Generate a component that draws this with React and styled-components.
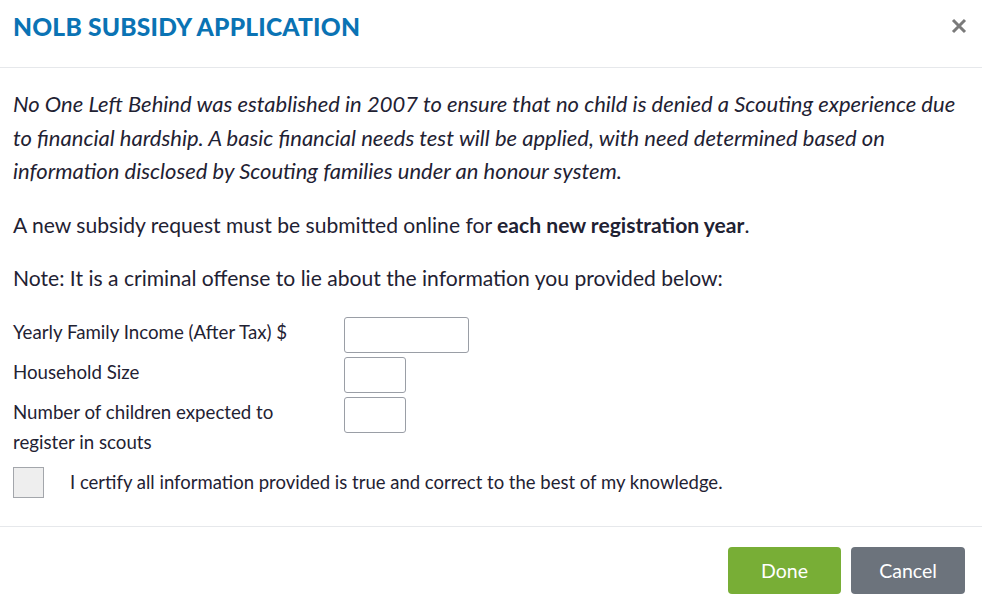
import React from 'react';
import styled, { createGlobalStyle } from 'styled-components';

const GlobalStyle = createGlobalStyle`
  html, body {
    margin: 0;
    padding: 0;
    background: #ffffff;
  }

  body {
    font-family: Lato, "Liberation Sans", sans-serif;
    color: #1f2233;
  }
`;

const Modal = styled.div`
  width: 982px;
  height: 606px;
  display: flex;
  flex-direction: column;
  background: #ffffff;
`;

const Header = styled.div`
  height: 68px;
  box-sizing: border-box;
  border-bottom: 1px solid #e6e8eb;
  display: flex;
  align-items: center;
  justify-content: space-between;
  padding: 0 13px 14px 13px;
`;

const Title = styled.h1`
  margin: 0;
  font-size: 24.6px;
  font-weight: 900;
  letter-spacing: 0.2px;
  color: #0a73b4;
`;

const CloseButton = styled.button`
  border: none;
  background: none;
  padding: 0;
  width: 18px;
  height: 18px;
  cursor: pointer;
  display: flex;
`;

const Body = styled.div`
  flex: 1;
  padding: 19px 13px 0 13px;
  border-bottom: 1px solid #e6e8eb;
`;

const Intro = styled.p`
  margin: 0 0 20px 0;
  width: 950px;
  font-size: 22px;
  line-height: 33.5px;
  font-style: italic;
`;

const Paragraph = styled.p`
  margin: 0 0 20px 0;
  font-size: 21.1px;
  line-height: 33px;
`;

const FormGrid = styled.div`
  display: grid;
  grid-template-columns: 331px auto;
  row-gap: 4px;
  padding-top: 3px;
`;

const Label = styled.label`
  font-size: 18.7px;
  line-height: 30px;
  width: 290px;
`;

const Input = styled.input`
  box-sizing: border-box;
  width: ${({ wide }) => (wide ? '125px' : '62px')};
  height: 36px;
  border: 1px solid #9a9ea6;
  border-radius: 3px;
  background: #ffffff;
`;

const CertifyRow = styled.div`
  display: flex;
  align-items: center;
  gap: 26px;
  margin-top: 10px;
`;

const Checkbox = styled.span`
  width: 31px;
  height: 31px;
  box-sizing: border-box;
  border: 1px solid #a3a6ab;
  background: #eeeeee;
  flex-shrink: 0;
`;

const CertifyText = styled.span`
  font-size: 18.5px;
`;

const Footer = styled.div`
  height: 79px;
  display: flex;
  justify-content: flex-end;
  align-items: flex-start;
  gap: 10px;
  padding: 20px 17px 0 0;
  box-sizing: border-box;
`;

const Button = styled.button`
  width: ${({ w }) => w}px;
  height: 47px;
  border: none;
  border-radius: 4px;
  color: #ffffff;
  font-family: inherit;
  font-size: 19.5px;
  background: ${({ variant }) => (variant === 'primary' ? '#78ae36' : '#6c737c')};
  cursor: pointer;
`;

const App = () => (
  <Modal>
    <GlobalStyle />
    <Header>
      <Title>NOLB SUBSIDY APPLICATION</Title>
      <CloseButton aria-label="Close">
        <svg width="16" height="16" viewBox="0 0 16 16">
          <path d="M2 2 L14 14 M14 2 L2 14" stroke="#7a7a7a" strokeWidth="3" />
        </svg>
      </CloseButton>
    </Header>

    <Body>
      <Intro>
        No One Left Behind was established in 2007 to ensure that no child is denied a Scouting experience due
        to financial hardship. A basic financial needs test will be applied, with need determined based on
        information disclosed by Scouting families under an honour system.
      </Intro>
      <Paragraph>
        A new subsidy request must be submitted online for <b>each new registration year</b>.
      </Paragraph>
      <Paragraph>
        Note: It is a criminal offense to lie about the information you provided below:
      </Paragraph>

      <FormGrid>
        <Label>Yearly Family Income (After Tax) $</Label>
        <Input wide />
        <Label>Household Size</Label>
        <Input />
        <Label>Number of children expected to register in scouts</Label>
        <Input />
      </FormGrid>

      <CertifyRow>
        <Checkbox />
        <CertifyText>I certify all information provided is true and correct to the best of my knowledge.</CertifyText>
      </CertifyRow>
    </Body>

    <Footer>
      <Button variant="primary" w={113}>Done</Button>
      <Button w={114}>Cancel</Button>
    </Footer>
  </Modal>
);

export default App;
